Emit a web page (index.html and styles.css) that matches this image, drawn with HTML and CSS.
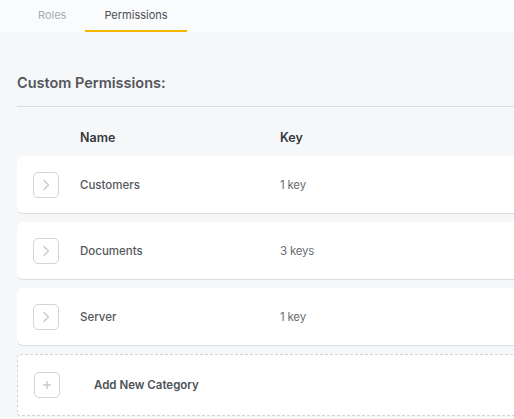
FILE: index.html
```html
<!DOCTYPE html>
<html>
<head>
    <title>Permissions</title>
    <link rel="stylesheet" href="styles.css">
</head>
<body>
    <div class="tabs">
        <div class="tab">Roles</div>
        <div class="tab active">Permissions</div>
    </div>

    <div class="main">
        <h2 class="title">Custom Permissions:</h2>

        <div class="head-row">
            <div></div>
            <div>Name</div>
            <div>Key</div>
        </div>

        <div class="card">
            <div class="toggle">
                <svg width="10" height="12" viewBox="0 0 10 12"><path d="M3 1.5 L7.5 6 L3 10.5" fill="none" stroke="#c9c9ce" stroke-width="1.3" stroke-linecap="round" stroke-linejoin="round"/></svg>
            </div>
            <div class="name">Customers</div>
            <div class="key">1 key</div>
        </div>

        <div class="card">
            <div class="toggle">
                <svg width="10" height="12" viewBox="0 0 10 12"><path d="M3 1.5 L7.5 6 L3 10.5" fill="none" stroke="#c9c9ce" stroke-width="1.3" stroke-linecap="round" stroke-linejoin="round"/></svg>
            </div>
            <div class="name">Documents</div>
            <div class="key">3 keys</div>
        </div>

        <div class="card">
            <div class="toggle">
                <svg width="10" height="12" viewBox="0 0 10 12"><path d="M3 1.5 L7.5 6 L3 10.5" fill="none" stroke="#c9c9ce" stroke-width="1.3" stroke-linecap="round" stroke-linejoin="round"/></svg>
            </div>
            <div class="name">Server</div>
            <div class="key">1 key</div>
        </div>

        <div class="add-card">
            <div class="toggle">
                <svg width="10" height="10" viewBox="0 0 10 10"><path d="M5 1.5 V8.5 M1.5 5 H8.5" fill="none" stroke="#c9c9ce" stroke-width="1.4" stroke-linecap="round"/></svg>
            </div>
            <div class="add-label">Add New Category</div>
        </div>
    </div>
</body>
</html>
```

FILE: styles.css
```css
body {
    margin: 0;
    background: #f6f7f9;
    font-family: Inter, "Noto Sans", sans-serif;
    color: #555a60;
    overflow: hidden;
}
.tabs {
    display: flex;
    height: 32px;
    padding-left: 19px;
    background: #fafbfc;
}
.tab {
    padding: 0 19px;
    font-size: 11px;
    line-height: 30px;
    color: #a8abb0;
    border-bottom: 2px solid transparent;
}
.tab.active {
    color: #4a4e54;
    border-bottom-color: #f7b500;
}
.main {
    padding-left: 17px;
}
.title {
    margin: 40px 0 0;
    padding-bottom: 12px;
    font-size: 14.5px;
    line-height: 22px;
    font-weight: 600;
    color: #52565c;
    border-bottom: 1px solid #dcdde0;
}
.head-row {
    display: grid;
    grid-template-columns: 63px 200px 1fr;
    height: 28px;
    align-items: center;
    margin: 16px 0 5px;
    font-size: 12.5px;
    font-weight: 600;
    color: #35383d;
}
.card {
    display: grid;
    grid-template-columns: 63px 200px 1fr;
    align-items: center;
    height: 57px;
    margin-bottom: 9px;
    background: white;
    border-radius: 6px 0 0 6px;
    box-shadow: 0 1px 0 #dcdde0;
}
.toggle {
    width: 24px;
    height: 24px;
    margin-left: 16px;
    border: 1px solid #d3d3d8;
    border-radius: 5px;
    display: flex;
    align-items: center;
    justify-content: center;
    background: white;
}
.name {
    font-size: 11.5px;
    font-weight: 500;
    color: #53575d;
}
.key {
    font-size: 11.5px;
    color: #6a6d73;
    letter-spacing: -0.2px;
}
.add-card {
    display: flex;
    align-items: center;
    height: 60px;
    background: white;
    border: 1px dashed #d2d3d8;
    border-right: none;
    border-radius: 3px 0 0 3px;
}
.add-label {
    margin-left: 34px;
    font-size: 11.5px;
    font-weight: 600;
    color: #4e5258;
}
```
